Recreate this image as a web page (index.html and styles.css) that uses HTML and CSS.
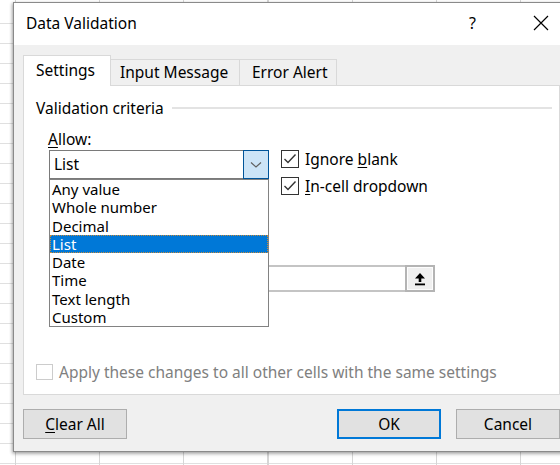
FILE: index.html
```html
<!DOCTYPE html>
<html>
<head>
<meta charset="utf-8">
<link rel="stylesheet" href="styles.css">
</head>
<body>
<div class="sheet"></div>
<div class="dialog">
  <div class="titlebar">
    <span class="title">Data Validation</span>
    <span class="help">?</span>
    <svg class="close" width="16" height="16" viewBox="0 0 16 16"><path d="M1 1 L15 15 M15 1 L1 15" stroke="#000" stroke-width="1.2" fill="none"/></svg>
  </div>
  <div class="content">
    <div class="tabs">
      <div class="tab active tab-settings">Settings</div>
      <div class="tab tab-input">Input Message</div>
      <div class="tab tab-error">Error Alert</div>
    </div>
    <div class="panel">
      <div class="legend">Validation criteria</div>
      <div class="label"><u>A</u>llow:</div>
      <div class="row">
        <div class="combo">
          <span class="combo-text">List</span>
          <span class="combo-btn"><svg width="12" height="8" viewBox="0 0 12 8"><path d="M1 1.5 L6 6 L11 1.5" stroke="#606060" stroke-width="1.2" fill="none"/></svg></span>
          <ul class="list">
            <li>Any value</li>
            <li>Whole number</li>
            <li>Decimal</li>
            <li class="sel">List</li>
            <li>Date</li>
            <li>Time</li>
            <li>Text length</li>
            <li>Custom</li>
          </ul>
        </div>
        <div class="checks">
          <label class="check"><span class="box"><svg width="14" height="12" viewBox="0 0 14 12"><path d="M1.5 6 L5 9.5 L12.5 1.5" stroke="#333" stroke-width="1.4" fill="none"/></svg></span><span>Ignore <u>b</u>lank</span></label>
          <label class="check"><span class="box"><svg width="14" height="12" viewBox="0 0 14 12"><path d="M1.5 6 L5 9.5 L12.5 1.5" stroke="#333" stroke-width="1.4" fill="none"/></svg></span><span><u>I</u>n-cell dropdown</span></label>
        </div>
      </div>
      <div class="source">
        <div class="source-input"></div>
        <div class="ref-btn"><svg width="14" height="14" viewBox="0 0 14 14"><path d="M7 1 L12 6.5 L8.3 6.5 L8.3 10 L5.7 10 L5.7 6.5 L2 6.5 Z" fill="#000"/><rect x="2" y="11.5" width="10" height="1.8" fill="#000"/></svg></div>
      </div>
      <label class="apply"><span class="box disabled"></span><span>Apply these changes to all other cells with the same settings</span></label>
    </div>
    <div class="buttons">
      <button class="btn"><u>C</u>lear All</button>
      <div class="spacer"></div>
      <button class="btn default">OK</button>
      <button class="btn">Cancel</button>
    </div>
  </div>
</div>
</body>
</html>
```

FILE: styles.css
```css
* { box-sizing: border-box; }
html, body {
  margin: 0;
  padding: 0;
}
body {
  width: 560px;
  height: 465px;
  overflow: hidden;
  position: relative;
  background: #fff;
  font-family: "Noto Sans", "Segoe UI", sans-serif;
  font-size: 15.5px;
  color: #000;
}
.sheet {
  width: 560px;
  height: 465px;
  background-image:
    linear-gradient(to right, transparent 0, transparent 15px, #d6d6d6 15px, #d6d6d6 16px, transparent 16px),
    repeating-linear-gradient(to right, transparent 0, transparent 83px, #d6d6d6 83px, #d6d6d6 84.2px),
    repeating-linear-gradient(to bottom, transparent 0, transparent 19px, #e0e0e0 19px, #e0e0e0 20px);
  background-position: 0 0, 16px 0, 0 4px;
}
.dialog {
  position: absolute;
  left: 13px;
  top: 2px;
  width: 600px;
  height: 450px;
  background: #f0f0f0;
  border: 1px solid #8a8a8a;
  box-shadow: -1px 1px 3px rgba(0,0,0,0.25), 0 2px 4px rgba(0,0,0,0.2);
  display: flex;
  flex-direction: column;
}
.titlebar {
  height: 42px;
  background: #fff;
  display: flex;
  align-items: center;
  padding-left: 12px;
  flex-shrink: 0;
}
.title {
  font-size: 15.5px;
  flex: 1;
  margin-top: -2px;
}
.help {
  font-size: 16px;
  width: 20px;
  margin-right: 44px;
  margin-top: -2px;
}
.close {
  margin-right: 63px;
  margin-top: -2px;
}
.content {
  padding: 10px 0 0 9px;
  width: 546px;
}
.tabs {
  display: flex;
  align-items: flex-end;
  height: 30px;
  position: relative;
  z-index: 1;
}
.tab {
  height: 26px;
  border: 1px solid #d9d9d9;
  border-bottom: none;
  background: #f0f0f0;
  line-height: 25px;
  margin-right: -1px;
  white-space: nowrap;
}
.tab.active {
  height: 31px;
  background: #fff;
  line-height: 29px;
  margin-bottom: -1px;
}
.tab-settings { width: 88px; padding-left: 12px; }
.tab-input { width: 130px; padding-left: 9px; }
.tab-error { width: 98px; padding-left: 12px; }
.panel {
  height: 310px;
  background: #fff;
  border: 1px solid #d9d9d9;
  padding: 12px 7px 0 12px;
  position: relative;
}
.legend {
  display: flex;
  align-items: center;
  line-height: 20px;
}
.legend::after {
  content: "";
  flex: 1;
  border-top: 2px solid #e3e3e3;
  margin-left: 8px;
}
.label {
  margin: 11px 0 0 12px;
  line-height: 20px;
}
u { text-decoration-thickness: 1px; text-underline-offset: 2px; }
.row {
  display: flex;
  align-items: flex-start;
  height: 29px;
  margin: 1px 0 0 13px;
}
.combo {
  width: 220px;
  height: 29px;
  border: 1px solid #7a7a7a;
  display: flex;
  align-items: center;
  position: relative;
  z-index: 2;
}
.combo-text {
  flex: 1;
  padding-left: 4px;
  margin-top: -1px;
}
.combo-btn {
  width: 26px;
  height: 29px;
  margin: -1px -1px -1px 0;
  background: #cce4f7;
  border: 1px solid #005499;
  display: flex;
  align-items: center;
  justify-content: center;
}
.list {
  position: absolute;
  left: -1px;
  top: 28px;
  width: 220px;
  height: 148px;
  margin: 0;
  padding: 0;
  list-style: none;
  background: #fff;
  border: 1px solid #828282;
  font-size: 15px;
}
.list li {
  height: 18.3px;
  line-height: 18.3px;
  padding-left: 2px;
  white-space: nowrap;
}
.list li.sel {
  background: #0078d7;
  color: #fff;
  outline: 1px dotted #c98b3a;
  outline-offset: -1px;
}
.checks {
  margin-left: 12px;
  display: flex;
  flex-direction: column;
  gap: 9px;
}
.check {
  display: flex;
  align-items: center;
  height: 18px;
  white-space: nowrap;
}
.box {
  width: 18px;
  height: 18px;
  border: 1px solid #333;
  background: #fff;
  display: flex;
  align-items: center;
  justify-content: center;
  margin-right: 6px;
  flex-shrink: 0;
}
.box.disabled {
  border-color: #cccccc;
  width: 17px;
  height: 16px;
}
.source {
  display: flex;
  margin: 86px 0 0 13px;
  width: 386px;
  height: 27px;
}
.source-input {
  flex: 1;
  border: 2px solid #c4c4c4;
  border-right: none;
  background: #fff;
}
.ref-btn {
  width: 30px;
  border: 2px solid #b4b4b4;
  background: #f0f0f0;
  display: flex;
  align-items: center;
  justify-content: center;
  box-shadow: inset 0 0 0 1px #fdfdfd;
}
.apply {
  display: flex;
  align-items: center;
  color: #808080;
  margin-top: 70px;
  height: 20px;
  white-space: nowrap;
}
.apply .box { margin-right: 6px; }
.buttons {
  display: flex;
  margin-top: 14px;
  gap: 15px;
}
.spacer { flex: 1; }
.btn {
  width: 104px;
  height: 30px;
  background: #e1e1e1;
  border: 1px solid #adadad;
  font-family: inherit;
  font-size: 15.5px;
  color: #000;
  padding: 0;
}
.btn.default {
  border: 2px solid #0078d7;
}
```
